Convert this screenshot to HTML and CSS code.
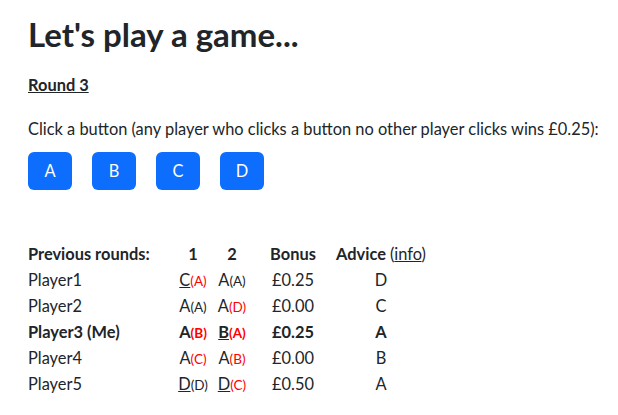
FILE: index.html
```html
<!DOCTYPE html>
<html>
<head>
<meta charset="utf-8">
<link rel="stylesheet" href="styles.css">
</head>
<body>
<div class="container">
  <h1 class="title">Let's play a game...</h1>
  <p class="round"><u><b>Round 3</b></u></p>
  <p class="intro">Click a button (any player who clicks a button no other player clicks wins £0.25):</p>
  <div class="buttons">
    <button class="btn">A</button>
    <button class="btn">B</button>
    <button class="btn">C</button>
    <button class="btn">D</button>
  </div>
  <table class="results">
    <colgroup>
      <col class="c-name"><col class="c-r"><col class="c-r2"><col class="c-bonus"><col class="c-adv">
    </colgroup>
    <thead>
      <tr><th class="name">Previous rounds:</th><th>1</th><th>2</th><th>Bonus</th><th>Advice <span class="info">(<u>info</u>)</span></th></tr>
    </thead>
    <tbody>
      <tr><td class="name">Player1</td><td><u>C</u><small class="red">(A)</small></td><td>A<small>(A)</small></td><td>£0.25</td><td>D</td></tr>
      <tr><td class="name">Player2</td><td>A<small>(A)</small></td><td>A<small class="red">(D)</small></td><td>£0.00</td><td>C</td></tr>
      <tr class="me"><td class="name">Player3 (Me)</td><td>A<small class="red">(B)</small></td><td><u>B</u><small class="red">(A)</small></td><td>£0.25</td><td>A</td></tr>
      <tr><td class="name">Player4</td><td>A<small class="red">(C)</small></td><td>A<small class="red">(B)</small></td><td>£0.00</td><td>B</td></tr>
      <tr><td class="name">Player5</td><td><u>D</u><small>(D)</small></td><td><u>D</u><small class="red">(C)</small></td><td>£0.50</td><td>A</td></tr>
    </tbody>
  </table>
</div>
</body>
</html>
```
FILE: styles.css
```css
* { box-sizing: border-box; }
body {
  margin: 0;
  font-family: Lato, "Liberation Sans", sans-serif;
  font-size: 16.4px;
  line-height: 1.5;
  color: #212529;
  background: #fff;
}
.container {
  padding: 15px 28px;
}
.title {
  font-size: 33px;
  font-weight: 700;
  line-height: 1.2;
  margin: 0 0 18px;
}
.round { margin: 0 0 20px; }
.intro { margin: 0 0 10px; white-space: nowrap; }
.buttons {
  display: flex;
  gap: 20px;
}
.btn {
  width: 44px;
  height: 38px;
  border: 0;
  border-radius: 6px;
  background: #0d6efd;
  color: #fff;
  font: inherit;
  padding: 0;
}
.results {
  margin-top: 51px;
  border-collapse: collapse;
}
.results th, .results td {
  padding: 0;
  height: 26px;
  text-align: center;
  white-space: nowrap;
}
.results th { font-weight: 700; }
.results .name { text-align: left; }
.c-name { width: 146px; }
.c-r { width: 38px; }
.c-r2 { width: 40px; }
.c-bonus { width: 82px; }
.c-adv { width: 94px; }
.info { font-weight: 400; }
small { font-size: 13.5px; }
.red { color: #f00; }
.me td { font-weight: 700; }
```
